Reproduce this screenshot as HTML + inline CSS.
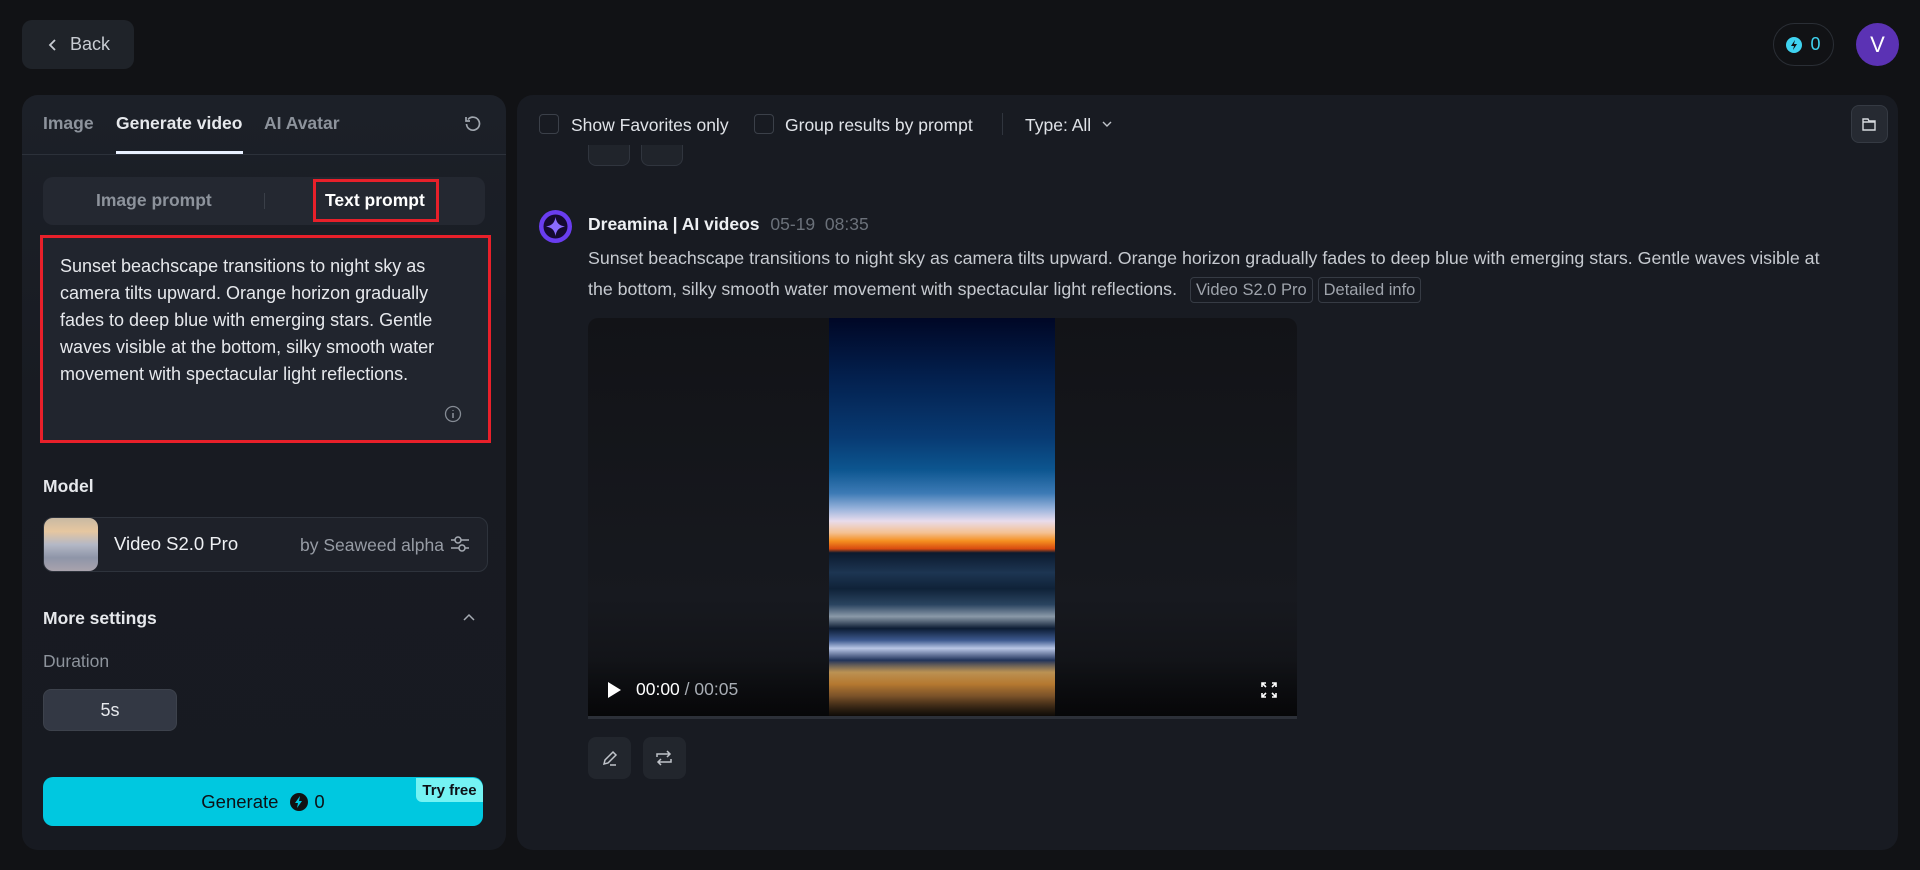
<!DOCTYPE html>
<html><head><meta charset="utf-8"><style>
*{box-sizing:border-box;margin:0;padding:0}
body{width:1920px;height:870px;background:#111215;font-family:"Liberation Sans",Arial,sans-serif;position:relative;overflow:hidden;color:#e6e8ec}
.abs{position:absolute}
.back{left:22px;top:20px;width:112px;height:49px;border-radius:10px;background:#1f2329;color:#c8ccd2;font-size:18px;display:flex;align-items:center;padding-left:24px}
.left{left:22px;top:95px;width:484px;height:755px;border-radius:16px;background:linear-gradient(180deg,#1c2028 0%,#181b22 40%,#171a21 100%)}
.right{left:517px;top:95px;width:1381px;height:755px;border-radius:16px;background:#181b22}
.tab{top:113px;font-size:17.5px;font-weight:bold;color:#8d939c}
.txt{color:#e6e8ec}
</style></head><body>
<div class="abs back"><svg width="14" height="14" viewBox="0 0 14 14" style="margin-right:10px"><path d="M9 2L4 7l5 5" fill="none" stroke="#c8ccd2" stroke-width="1.8"/></svg>Back</div>

<div class="abs" style="left:1773px;top:23px;width:61px;height:43px;border-radius:22px;border:1px solid #2a2e35;display:flex;align-items:center;justify-content:center;gap:8px;color:#3fd3f0;font-size:18px"><svg width="16" height="16" viewBox="0 0 16 16"><circle cx="8" cy="8" r="8" fill="#3fd3f0"/><path d="M9 3L5 9h3l-1 4 4-6H8z" fill="#111"/></svg>0</div>
<div class="abs" style="left:1856px;top:23px;width:43px;height:43px;border-radius:50%;background:#5b32b4;color:#fff;font-size:22px;display:flex;align-items:center;justify-content:center">V</div>

<div class="abs left"></div>
<div class="abs tab" style="left:43px">Image</div>
<div class="abs tab txt" style="left:116px">Generate video</div>
<div class="abs tab" style="left:264px">AI Avatar</div>
<div class="abs" style="left:116px;top:151px;width:127px;height:3px;background:#e8f0ff"></div>
<div class="abs" style="left:22px;top:154px;width:484px;height:1px;background:#2c313a"></div>
<svg class="abs" style="left:463px;top:114px" width="20" height="20" viewBox="0 0 20 20"><path d="M5 5.5A6.5 6.5 0 1 1 3.5 10" fill="none" stroke="#a0a6ae" stroke-width="1.7"/><path d="M3 3v4h4" fill="none" stroke="#a0a6ae" stroke-width="1.7"/></svg>

<div class="abs" style="left:43px;top:177px;width:442px;height:48px;border-radius:10px;background:#242831"></div>
<div class="abs" style="left:96px;top:190px;font-size:17.5px;font-weight:bold;color:#8d939c">Image prompt</div>
<div class="abs" style="left:264px;top:193px;width:1px;height:16px;background:#3a3f48"></div>
<div class="abs" style="left:313px;top:179px;width:126px;height:43px;border:3px solid #e8202a"></div>
<div class="abs" style="left:325px;top:190px;font-size:17.5px;font-weight:bold;color:#fff">Text prompt</div>

<div class="abs" style="left:40px;top:235px;width:451px;height:208px;border:3px solid #e8202a;background:#21252e"></div>
<div class="abs" style="left:60px;top:253px;width:430px;font-size:18px;line-height:27px;color:#e6e8ec">Sunset beachscape transitions to night sky as<br>camera tilts upward. Orange horizon gradually<br>fades to deep blue with emerging stars. Gentle<br>waves visible at the bottom, silky smooth water<br>movement with spectacular light reflections.</div>
<svg class="abs" style="left:444px;top:405px" width="18" height="18" viewBox="0 0 18 18"><circle cx="9" cy="9" r="7.5" fill="none" stroke="#858b94" stroke-width="1.3"/><path d="M9 8v5M9 5.2v.8" stroke="#858b94" stroke-width="1.6"/></svg>

<div class="abs" style="left:43px;top:476px;font-size:17.5px;font-weight:bold">Model</div>
<div class="abs" style="left:43px;top:517px;width:445px;height:55px;border-radius:10px;border:1px solid #2e333c;background:#1e2129"></div>
<div class="abs" style="left:44px;top:518px;width:54px;height:53px;border-radius:9px;background:linear-gradient(180deg,#c9b9a3 0%,#e6c7a0 25%,#b4b8c6 50%,#8e95a8 75%,#a9a3ad 100%)"></div>
<div class="abs" style="left:114px;top:533px;font-size:18.5px;color:#eef0f3">Video S2.0 Pro</div>
<div class="abs" style="left:300px;top:535px;font-size:17.5px;color:#979ca5">by Seaweed alpha</div>
<svg class="abs" style="left:450px;top:535px" width="20" height="18" viewBox="0 0 20 18"><path d="M1 5h18M1 13h18" stroke="#a6abb3" stroke-width="1.5"/><circle cx="8" cy="5" r="3" fill="#1e2129" stroke="#a6abb3" stroke-width="1.5"/><circle cx="12" cy="13" r="3" fill="#1e2129" stroke="#a6abb3" stroke-width="1.5"/></svg>

<div class="abs" style="left:43px;top:608px;font-size:17.5px;font-weight:bold">More settings</div>
<svg class="abs" style="left:462px;top:612px" width="14" height="10" viewBox="0 0 14 10"><path d="M2 8l5-5 5 5" fill="none" stroke="#a6abb3" stroke-width="1.5"/></svg>
<div class="abs" style="left:43px;top:651px;font-size:17.5px;color:#8d939c">Duration</div>
<div class="abs" style="left:43px;top:689px;width:134px;height:42px;border-radius:8px;background:#333844;border:1px solid #3d424c;display:flex;align-items:center;justify-content:center;font-size:18px;color:#e6e8ec">5s</div>

<div class="abs" style="left:43px;top:777px;width:440px;height:49px;border-radius:10px;background:#00c8e0;display:flex;align-items:center;justify-content:center;font-size:18.5px;color:#0d1116"><span>Generate</span><svg width="18" height="18" viewBox="0 0 18 18" style="margin:0 6px 0 12px"><circle cx="9" cy="9" r="9" fill="#111"/><path d="M10 3L5 10h3l-1 5 5-7H9z" fill="#00c8e0"/></svg><span>0</span></div>
<div class="abs" style="left:416px;top:778px;width:67px;height:24px;border-radius:0 10px 0 6px;background:#74f3f3;font-size:15px;font-weight:bold;color:#0d1116;display:flex;align-items:center;justify-content:center">Try free</div>

<div class="abs right"></div>
<div class="abs" style="left:539px;top:114px;width:20px;height:20px;border:1px solid #3b4049;border-radius:4px"></div>
<div class="abs" style="left:571px;top:115px;font-size:17.5px;color:#e0e3e8">Show Favorites only</div>
<div class="abs" style="left:754px;top:114px;width:20px;height:20px;border:1px solid #3b4049;border-radius:4px"></div>
<div class="abs" style="left:785px;top:115px;font-size:17.5px;color:#e0e3e8">Group results by prompt</div>
<div class="abs" style="left:1002px;top:113px;width:1px;height:22px;background:#30353e"></div>
<div class="abs" style="left:1025px;top:115px;font-size:17.5px;color:#e0e3e8">Type: All</div>
<svg class="abs" style="left:1101px;top:119px" width="12" height="10" viewBox="0 0 12 10"><path d="M2 3l4 4 4-4" fill="none" stroke="#c0c4ca" stroke-width="1.4"/></svg>
<div class="abs" style="left:1851px;top:105px;width:37px;height:38px;border-radius:8px;background:#262a32;border:1px solid #353a43"></div>
<svg class="abs" style="left:1861px;top:116px" width="16" height="16" viewBox="0 0 16 16"><path d="M2 3h5l1 2h6v9H2zM2 6h12" fill="none" stroke="#d6d9de" stroke-width="1.4"/></svg>

<div class="abs" style="left:588px;top:145px;width:42px;height:21px;border-radius:0 0 8px 8px;background:#20242b;border:1px solid #30353e;border-top:none"></div>
<div class="abs" style="left:641px;top:145px;width:42px;height:21px;border-radius:0 0 8px 8px;background:#20242b;border:1px solid #30353e;border-top:none"></div>

<svg class="abs" style="left:539px;top:210px" width="33" height="33" viewBox="0 0 33 33"><circle cx="16.5" cy="16.5" r="16.5" fill="#6a3df0"/><circle cx="16.5" cy="16.5" r="12" fill="#150a30"/><path d="M16.5 7C17.5 13 20 15.5 26 16.5 20 17.5 17.5 20 16.5 26 15.5 20 13 17.5 7 16.5 13 15.5 15.5 13 16.5 7z" fill="#8a6cff"/></svg>
<div class="abs" style="left:588px;top:214px;font-size:17.5px;font-weight:bold;color:#eef0f3">Dreamina | AI videos <span style="font-weight:normal;color:#6b717a;margin-left:6px">05-19&nbsp;&nbsp;08:35</span></div>
<div class="abs" style="left:588px;top:243px;width:1310px;font-size:17.8px;line-height:31px;color:#c6cad0;white-space:nowrap">Sunset beachscape transitions to night sky as camera tilts upward. Orange horizon gradually fades to deep blue with emerging stars. Gentle waves visible at<br>the bottom, silky smooth water movement with spectacular light reflections. <span style="display:inline-block;margin-left:8px;border:1px solid #363b44;border-radius:4px;padding:0 5px;line-height:24px;font-size:16.5px;color:#9ea3ab">Video S2.0 Pro</span> <span style="display:inline-block;border:1px solid #363b44;border-radius:4px;padding:0 5px;line-height:24px;font-size:16.5px;color:#9ea3ab">Detailed info</span></div>

<div class="abs" style="left:588px;top:318px;width:709px;height:401px;border-radius:10px 10px 0 0;background:linear-gradient(180deg,#121317,#17191f 70%,#0e0f12);overflow:hidden">
<div class="abs" style="left:241px;top:0;width:226px;height:398px;background:linear-gradient(180deg,#000726 0%,#03204e 15%,#083a72 30%,#0c558f 38%,#3c7ab5 44%,#9ab4dc 48%,#e8dcec 51%,#f4c090 54%,#f59020 56%,#d84a10 58%,#0b1a2e 59%,#1d3552 64%,#0f2238 68%,#2a4460 72%,#8a99a8 75%,#0c1c34 78%,#3e5a90 81%,#b9c6e6 83%,#22345c 86%,#d7a860 89%,#f0a040 92%,#c08040 95%,#201810 100%)"></div>
<div class="abs" style="left:0;top:340px;width:709px;height:58px;background:linear-gradient(180deg,rgba(0,0,0,0),rgba(0,0,0,.55))"></div>
<div class="abs" style="left:0;top:398px;width:709px;height:3px;background:#2c3038"></div>
<svg class="abs" style="left:18px;top:363px" width="16" height="18" viewBox="0 0 16 18"><path d="M2 1l13 8-13 8z" fill="#fff"/></svg>
<div class="abs" style="left:48px;top:361px;font-size:17.5px;color:#fff">00:00 <span style="color:#a8adb4">/ 00:05</span></div>
<svg class="abs" style="left:672px;top:363px" width="18" height="18" viewBox="0 0 18 18"><path d="M2 6V2h4M12 2h4v4M16 12v4h-4M6 16H2v-4M2 2l4 4M16 2l-4 4M16 16l-4-4M2 16l4-4" fill="none" stroke="#fff" stroke-width="1.6"/></svg>
</div>

<div class="abs" style="left:588px;top:737px;width:43px;height:42px;border-radius:8px;background:#22262d"></div>
<svg class="abs" style="left:600px;top:748px" width="20" height="20" viewBox="0 0 20 20"><path d="M4 16l1-4 8-8 3 3-8 8zM10 17h6" fill="none" stroke="#c0c4ca" stroke-width="1.5"/></svg>
<div class="abs" style="left:643px;top:737px;width:43px;height:42px;border-radius:8px;background:#22262d"></div>
<svg class="abs" style="left:654px;top:748px" width="20" height="20" viewBox="0 0 20 20"><path d="M3 9V6h13M13 3l3 3-3 3M17 11v3H4M7 17l-3-3 3-3" fill="none" stroke="#c0c4ca" stroke-width="1.5"/></svg>
</body></html>
